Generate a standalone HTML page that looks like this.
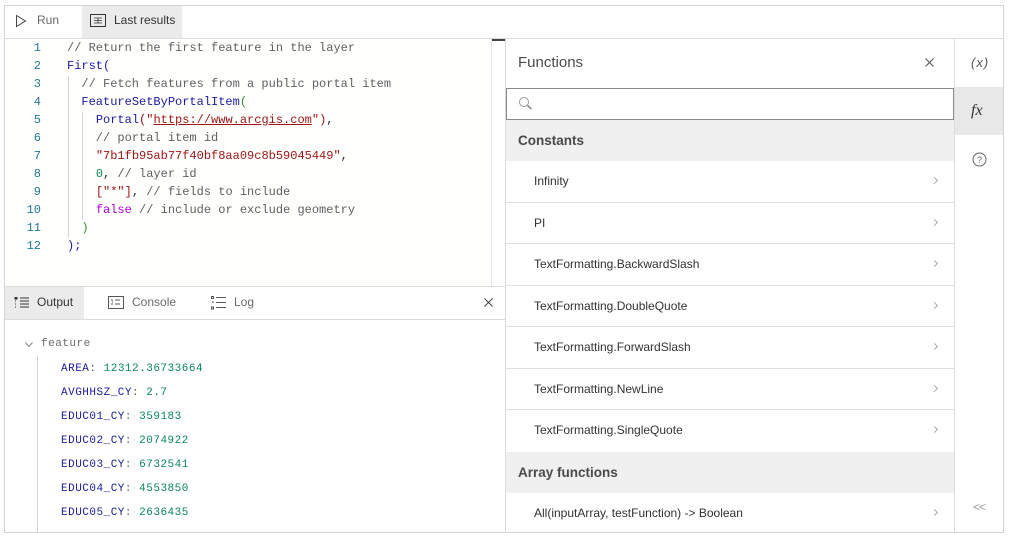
<!DOCTYPE html><html><head><style>
*{margin:0;padding:0;box-sizing:border-box}
body{width:1009px;height:537px;background:#fff;position:relative;font-family:"Liberation Sans",sans-serif;overflow:hidden;color:#323232}
.a{position:absolute}
.mono{font-family:"Liberation Mono",monospace;font-size:12px}
.ln{position:absolute;left:14px;width:27px;text-align:right;color:#237893}
.cl{position:absolute;left:67px;white-space:pre}
.c{color:#5f5f5f}.f{color:#1a1aa6}.s{color:#a31515}.n{color:#09885a}.k{color:#af00db}.p{color:#319331}
.row{position:absolute;left:506px;width:448px;height:41.5px;border-bottom:1px solid #e0e0e0;font-size:12px;color:#323232}
.row span{position:absolute;left:28px;top:13px}
.row i{position:absolute;right:17px;top:17px;width:5px;height:5px;border-right:1px solid #aaa;border-top:1px solid #aaa;transform:rotate(45deg)}
.hd{position:absolute;left:506px;width:448px;height:41px;background:#f0f0f0;font-size:13.5px;font-weight:bold;color:#4a4a4a}
.hd span{position:absolute;left:12px;top:13px}
.op{position:absolute;left:61px;white-space:pre;font-size:11px;letter-spacing:.5px}
</style></head><body>
<div class="a" style="left:4px;top:5px;width:1000px;height:528px;border:1px solid #d4d4d4"></div>
<div class="a" style="left:5px;top:38px;width:998px;height:1px;background:#dcdcdc"></div>
<div class="a" style="left:82px;top:6px;width:100px;height:32px;background:#ebebeb"></div>
<svg class="a" style="left:15px;top:14px" width="12" height="14"><path d="M1.5 1.5 L10.5 7 L1.5 12.5 Z" fill="none" stroke="#444" stroke-width="1"/></svg>
<div class="a" style="left:37px;top:13px;font-size:12px;color:#6a6a6a">Run</div>
<svg class="a" style="left:90px;top:14px" width="16" height="13"><rect x=".5" y=".5" width="15" height="12" fill="none" stroke="#333"/><path d="M4 4h8M4 6.5h8M4 9h8M8 4v5" stroke="#333" stroke-width=".8"/></svg>
<div class="a" style="left:114px;top:13px;font-size:12px;color:#333">Last results</div>
<div class="a" style="left:5px;top:39px;width:486px;height:247px;background:#fffffe"></div>
<div class="a" style="left:491px;top:39px;width:1px;height:247px;background:#e4e4e4"></div>
<div class="a" style="left:492px;top:39px;width:13px;height:2px;background:#444"></div>
<div class="a" style="left:505px;top:39px;width:1px;height:493px;background:#dcdcdc"></div>
<div class="a" style="left:68px;top:76px;width:1px;height:162px;background:#d6d6d6"></div>
<div class="a" style="left:82px;top:112px;width:1px;height:108px;background:#d6d6d6"></div>
<div class="mono">
<div class="ln" style="top:41px">1</div><div class="cl c" style="top:41px">// Return the first feature in the layer</div>
<div class="ln" style="top:59px">2</div><div class="cl f" style="top:59px">First(</div>
<div class="ln" style="top:77px">3</div><div class="cl c" style="top:77px">  // Fetch features from a public portal item</div>
<div class="ln" style="top:95px">4</div><div class="cl" style="top:95px">  <span class="f">FeatureSetByPortalItem</span><span class="p">(</span></div>
<div class="ln" style="top:113px">5</div><div class="cl" style="top:113px">    <span class="f">Portal</span><span class="s">("<u>https://www.arcgis.com</u>")</span>,</div>
<div class="ln" style="top:131px">6</div><div class="cl c" style="top:131px">    // portal item id</div>
<div class="ln" style="top:149px">7</div><div class="cl" style="top:149px">    <span class="s">"7b1fb95ab77f40bf8aa09c8b59045449"</span>,</div>
<div class="ln" style="top:167px">8</div><div class="cl" style="top:167px">    <span class="n">0</span>, <span class="c">// layer id</span></div>
<div class="ln" style="top:185px">9</div><div class="cl" style="top:185px">    <span class="s">["*"]</span>, <span class="c">// fields to include</span></div>
<div class="ln" style="top:203px">10</div><div class="cl" style="top:203px">    <span class="k">false</span> <span class="c">// include or exclude geometry</span></div>
<div class="ln" style="top:221px">11</div><div class="cl p" style="top:221px">  )</div>
<div class="ln" style="top:239px">12</div><div class="cl f" style="top:239px">);</div>
</div>
<div class="a" style="left:5px;top:286px;width:500px;height:1px;background:#dcdcdc"></div>
<div class="a" style="left:5px;top:319px;width:500px;height:1px;background:#dcdcdc"></div>
<div class="a" style="left:5px;top:287px;width:79px;height:32px;background:#ebebeb"></div>
<svg class="a" style="left:14px;top:296px" width="16" height="14"><path d="M1 1.5h2M1 1v2h2v-2M6 2h9M6 5h9M6 8h9M6 11h9M1 5h1M1 8h1M1 11h1" stroke="#333" stroke-width="1"/></svg>
<div class="a" style="left:37px;top:295px;font-size:12px;color:#333">Output</div>
<svg class="a" style="left:108px;top:296px" width="16" height="13"><rect x=".5" y=".5" width="15" height="12" fill="none" stroke="#555"/><path d="M3 4h2M3 8h2M7 4h5M7 8h5M4 6h1" stroke="#555"/></svg>
<div class="a" style="left:132px;top:295px;font-size:12px;color:#6a6a6a">Console</div>
<svg class="a" style="left:211px;top:296px" width="16" height="14"><rect x=".5" y=".5" width="2" height="2" fill="none" stroke="#555"/><rect x=".5" y="11" width="2" height="2" fill="none" stroke="#555"/><path d="M1 6h2M5 1.5h10M5 6.5h10M5 11.5h10" stroke="#555"/></svg>
<div class="a" style="left:234px;top:295px;font-size:12px;color:#6a6a6a">Log</div>
<svg class="a" style="left:484px;top:298px" width="9" height="9"><path d="M.5 .5l8 8M8.5 .5l-8 8" stroke="#444"/></svg>
<div class="a" style="left:37px;top:356px;width:1px;height:176px;background:#d6d6d6"></div>
<svg class="a" style="left:25px;top:342px" width="8" height="6"><path d="M.5 .5l3.5 4 3.5-4" fill="none" stroke="#888"/></svg>
<div class="mono">
<div class="a" style="left:41px;top:338px;font-size:11px;color:#6a6a6a;letter-spacing:.5px">feature</div>
<div class="op" style="top:363px"><span class="f">AREA</span><span class="c">:</span> <span class="n">12312.36733664</span></div>
<div class="op" style="top:387px"><span class="f">AVGHHSZ_CY</span><span class="c">:</span> <span class="n">2.7</span></div>
<div class="op" style="top:411px"><span class="f">EDUC01_CY</span><span class="c">:</span> <span class="n">359183</span></div>
<div class="op" style="top:435px"><span class="f">EDUC02_CY</span><span class="c">:</span> <span class="n">2074922</span></div>
<div class="op" style="top:459px"><span class="f">EDUC03_CY</span><span class="c">:</span> <span class="n">6732541</span></div>
<div class="op" style="top:483px"><span class="f">EDUC04_CY</span><span class="c">:</span> <span class="n">4553850</span></div>
<div class="op" style="top:507px"><span class="f">EDUC05_CY</span><span class="c">:</span> <span class="n">2636435</span></div>
</div>
<div class="a" style="left:518px;top:54px;font-size:15px;color:#4a4a4a">Functions</div>
<svg class="a" style="left:925px;top:58px" width="9" height="9"><path d="M.5 .5l8 8M8.5 .5l-8 8" stroke="#555"/></svg>
<div class="a" style="left:506px;top:88px;width:448px;height:32px;border:1px solid #8a8a8a;background:#fff"></div>
<svg class="a" style="left:518px;top:96px" width="16" height="15"><circle cx="6" cy="6" r="4.5" fill="none" stroke="#999"/><path d="M9.5 9.5l4 3.5" stroke="#888" stroke-width="1.5"/></svg>
<div class="hd" style="top:120px"><span>Constants</span></div>
<div class="row" style="top:161px"><span>Infinity</span><i></i></div>
<div class="row" style="top:202.5px"><span>PI</span><i></i></div>
<div class="row" style="top:244px"><span>TextFormatting.BackwardSlash</span><i></i></div>
<div class="row" style="top:285.5px"><span>TextFormatting.DoubleQuote</span><i></i></div>
<div class="row" style="top:327px"><span>TextFormatting.ForwardSlash</span><i></i></div>
<div class="row" style="top:368.5px"><span>TextFormatting.NewLine</span><i></i></div>
<div class="row" style="top:410px;border:none"><span>TextFormatting.SingleQuote</span><i></i></div>
<div class="hd" style="top:452px"><span>Array functions</span></div>
<div class="row" style="top:493px;border:none"><span>All(inputArray, testFunction) -&gt; Boolean</span><i></i></div>
<div class="a" style="left:954px;top:39px;width:1px;height:493px;background:#dcdcdc"></div>
<div class="a" style="left:955px;top:87px;width:48px;height:48px;background:#e8e8e8"></div>
<div class="a" style="left:971px;top:55px;font-size:13px;color:#555;font-style:italic;letter-spacing:1px">(x)</div>
<div class="a" style="left:971px;top:102px;font-size:16px;color:#333;font-style:italic;font-family:'Liberation Serif',serif">fx</div>
<svg class="a" style="left:972px;top:152px" width="15" height="15"><circle cx="7.5" cy="7.5" r="6.5" fill="none" stroke="#666"/><text x="7.5" y="11" font-size="9" text-anchor="middle" fill="#666" font-family="Liberation Sans">?</text></svg>
<div class="a" style="left:973px;top:500px;font-size:12px;color:#999;letter-spacing:-1px">&lt;&lt;</div>
</body></html>
